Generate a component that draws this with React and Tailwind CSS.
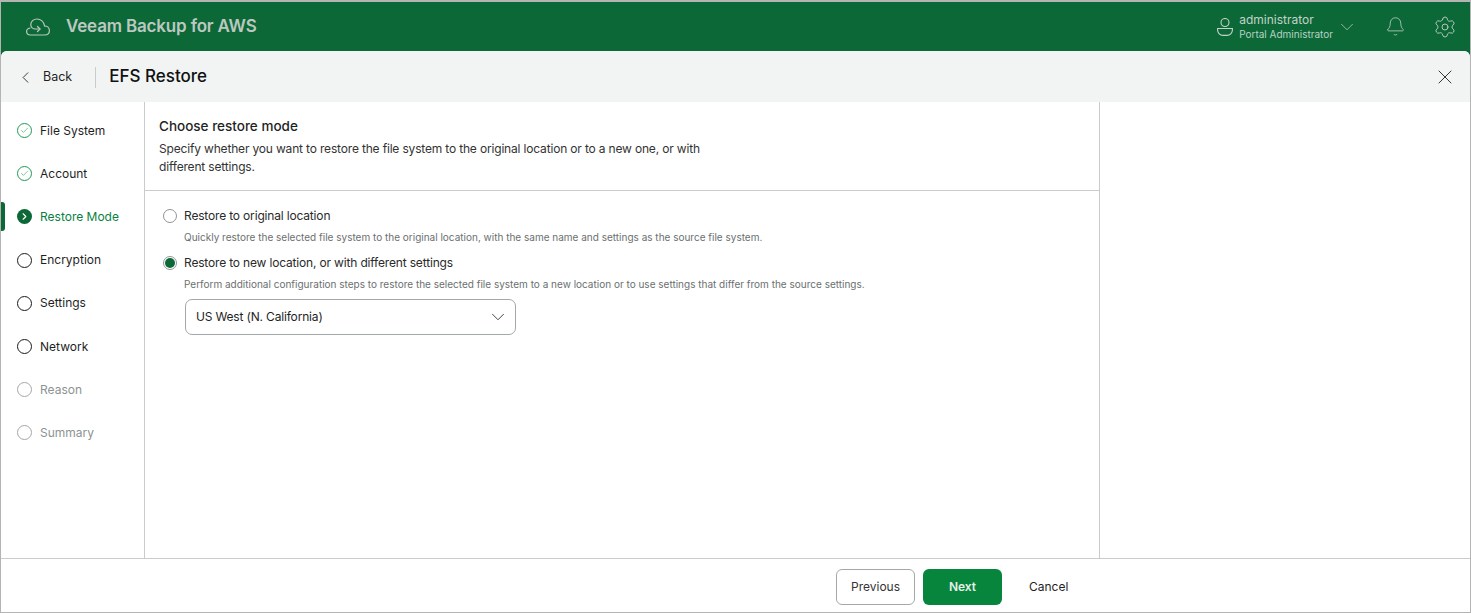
import { Bell, ChevronDown, ChevronLeft, ChevronRight, Settings, X, Check } from 'lucide-react';

const steps = [
  { label: 'File System', state: 'done' },
  { label: 'Account', state: 'done' },
  { label: 'Restore Mode', state: 'active' },
  { label: 'Encryption', state: 'todo' },
  { label: 'Settings', state: 'todo' },
  { label: 'Network', state: 'todo' },
  { label: 'Reason', state: 'disabled' },
  { label: 'Summary', state: 'disabled' },
];

function CloudLogo() {
  return (
    <svg width="24" height="18" viewBox="0 0 24 18" fill="none" stroke="#b9c9bf" strokeWidth="1.2" strokeLinecap="round" strokeLinejoin="round">
      <path d="M4 10C1.500 10.500.6 12 .6 13.500.6 15.800 2.300 17 4.500 17H18.500C21.500 17 23.400 15 23.400 12.500 23.400 9.800 21.300 8 18.600 8" />
      <path d="M18.600 8C17.800 4 14.800 1 11 1 7.500 1 4.800 3.500 4.800 6.500 4.800 9.300 7 11 9.500 11H14" />
      <path d="M11.500 8.500L14 11 11.500 13.500" />
    </svg>
  );
}

function UserIcon() {
  return (
    <svg width="16" height="18" viewBox="0 0 16 18" fill="none" stroke="#c3d2c9" strokeWidth="1.1">
      <circle cx="8" cy="4.500" r="4" />
      <path d="M.6 10.500h14.800v1.500a5.400 5.400 0 0 1-5.400 5.400H6A5.400 5.400 0 0 1 .6 12z" />
    </svg>
  );
}

function StepIcon({ state }) {
  if (state === 'done') {
    return (
      <span className="flex h-[15px] w-[15px] items-center justify-center rounded-full border border-[#1f9a57]">
        <Check size={9} strokeWidth={1.5} className="text-[#1f9a57]" />
      </span>
    );
  }
  if (state === 'active') {
    return (
      <span className="flex h-[15px] w-[15px] items-center justify-center rounded-full bg-[#0d6837]">
        <ChevronRight size={11} strokeWidth={2.400} className="text-white" />
      </span>
    );
  }
  if (state === 'todo') {
    return <span className="h-[15px] w-[15px] rounded-full border border-[#1a1a1a]" />;
  }
  return <span className="h-[15px] w-[15px] rounded-full border border-[#a3a8a8]" />;
}

function Step({ label, state }) {
  const textColor =
    state === 'active' ? 'text-[#0b7f3f]' : state === 'disabled' ? 'text-[#8d9393]' : 'text-[#1f1f1f]';
  return (
    <div className="relative flex h-[43.2px] items-center pl-[16px]">
      {state === 'active' && (
        <span className="absolute left-0 top-[7px] h-[29px] w-1 rounded-r-[3px] bg-[#0d6837]" />
      )}
      <StepIcon state={state} />
      <span className={`ml-[8px] text-[12px] ${textColor}`}>{label}</span>
    </div>
  );
}

export default function App() {
  return (
    <div className="flex h-[613px] w-[1471px] flex-col overflow-hidden border border-t-2 border-[#b4b4b4] bg-[#0d6837] font-['Inter',sans-serif]">
      {/* top bar */}
      <div className="flex h-[49px] shrink-0 items-center pl-[25px] pr-[13px]">
        <CloudLogo />
        <span className="ml-[16px] text-[17px] font-semibold tracking-[-0.17px] text-[#bcc9c1]">Veeam Backup for AWS</span>
        <div className="ml-auto flex items-center">
          <UserIcon />
          <div className="ml-[6px] flex flex-col">
            <span className="text-[12px] leading-[15px] text-[#c3d2c9]">administrator</span>
            <span className="text-[10px] leading-[15px] text-[#b5d3c3]">Portal Administrator</span>
          </div>
          <ChevronDown size={22} strokeWidth={0.8} className="ml-[3px] text-[#c3d2c9]" />
          <Bell size={21} strokeWidth={0.9} className="ml-[27px] text-[#c3d2c9]" />
          <Settings size={24} strokeWidth={0.9} className="ml-[27px] text-[#c3d2c9]" />
        </div>
      </div>

      <div className="flex min-h-0 flex-1 flex-col overflow-hidden rounded-t-[6px] bg-white">
        {/* title row */}
        <div className="flex h-[51px] shrink-0 items-center bg-[#f2f4f4] pl-[15px] pr-[13px] pt-[1px]">
          <ChevronLeft size={19} strokeWidth={1.100} className="text-[#1f1f1f]" />
          <span className="ml-[8px] text-[12.500px] text-[#1f1f1f]">Back</span>
          <span className="ml-[23px] h-[21px] w-px bg-[#c9cccc]" />
          <h1 className="ml-[13px] text-[17px] font-medium text-[#111]">EFS Restore</h1>
          <X size={24} strokeWidth={0.9} className="ml-auto text-[#1f1f1f]" />
        </div>

        {/* body */}
        <div className="flex min-h-0 flex-1">
          <aside className="w-[144px] shrink-0 border-r border-[#c9cccc] pt-[7px]">
            {steps.map((s) => (
              <Step key={s.label} label={s.label} state={s.state} />
            ))}
          </aside>

          <main className="w-[955px] shrink-0 border-r border-[#c9cccc]">
            <div className="h-[89px] border-b border-[#c9cccc] pl-[14px] pt-[15px]">
              <h2 className="text-[13.500px] leading-[19px] font-medium text-[#1f1f1f]">Choose restore mode</h2>
              <p className="mt-[4px] w-[570px] text-[12px] leading-[18px] tracking-[-0.17px] text-[#333]">
                Specify whether you want to restore the file system to the original location or to a new one, or with different settings.
              </p>
            </div>

            <div className="pl-[18px] pt-[16px]">
              <label className="flex h-[18px] items-center">
                <span className="h-[14px] w-[14px] rounded-full border border-[#8f9595] bg-white" />
                <span className="ml-[7px] text-[12px] tracking-[-0.17px] text-[#2a2a2a]">Restore to original location</span>
              </label>
              <p className="ml-[21px] mt-[5px] text-[10px] leading-[14px] text-[#6b7070]">
                Quickly restore the selected file system to the original location, with the same name and settings as the source file system.
              </p>
              <label className="mt-[10px] flex h-[18px] items-center">
                <span className="flex h-[14px] w-[14px] items-center justify-center rounded-full border border-[#8f9595] bg-white">
                  <span className="h-[10px] w-[10px] rounded-full bg-[#0d6837]" />
                </span>
                <span className="ml-[7px] text-[12px] tracking-[-0.17px] text-[#2a2a2a]">Restore to new location, or with different settings</span>
              </label>
              <p className="ml-[21px] mt-[5px] text-[10px] leading-[14px] text-[#6b7070]">
                Perform additional configuration steps to restore the selected file system to a new location or to use settings that differ from the source settings.
              </p>
              <div className="ml-[22px] mt-[8px] flex h-[36px] w-[331px] items-center justify-between rounded-[7px] border border-[#a3a8a8] pl-[10px] pr-[6px]">
                <span className="text-[12px] tracking-[-0.17px] text-[#1f1f1f]">US West (N. California)</span>
                <ChevronDown size={22} strokeWidth={0.9} className="text-[#1f1f1f]" />
              </div>
            </div>
          </main>
          <div className="flex-1" />
        </div>

        {/* footer */}
        <div className="flex h-[54px] shrink-0 items-center border-t border-[#c9cccc] pl-[835px] pt-[2px]">
          <button className="h-[36px] w-[79px] rounded-[6px] border border-[#a3a8a8] bg-white text-[12px] text-[#333]">Previous</button>
          <button className="ml-[8px] h-[36px] w-[79px] rounded-[6px] bg-[#07853d] text-[12px] font-semibold text-[#e6efe9]">Next</button>
          <button className="ml-[27px] text-[12px] text-[#1f1f1f]">Cancel</button>
        </div>
      </div>
    </div>
  );
}
